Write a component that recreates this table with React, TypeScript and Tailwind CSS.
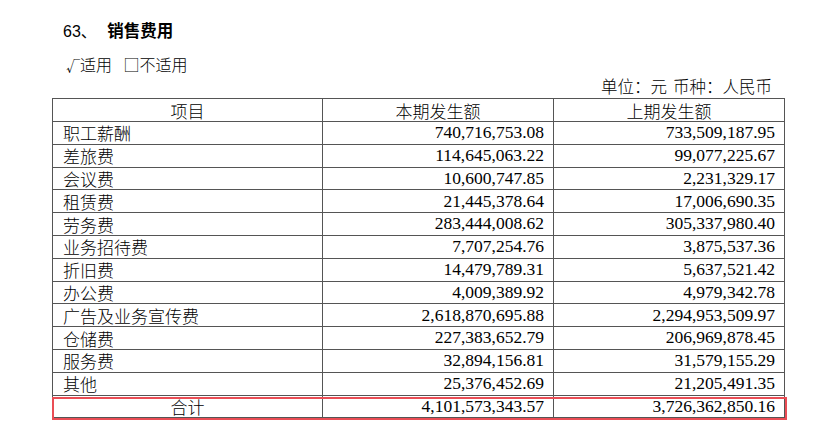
import React from "react";

type Row = { name: string; current: string; previous: string };

const rows: Row[] = [
  { name: "职工薪酬", current: "740,716,753.08", previous: "733,509,187.95" },
  { name: "差旅费", current: "114,645,063.22", previous: "99,077,225.67" },
  { name: "会议费", current: "10,600,747.85", previous: "2,231,329.17" },
  { name: "租赁费", current: "21,445,378.64", previous: "17,006,690.35" },
  { name: "劳务费", current: "283,444,008.62", previous: "305,337,980.40" },
  { name: "业务招待费", current: "7,707,254.76", previous: "3,875,537.36" },
  { name: "折旧费", current: "14,479,789.31", previous: "5,637,521.42" },
  { name: "办公费", current: "4,009,389.92", previous: "4,979,342.78" },
  { name: "广告及业务宣传费", current: "2,618,870,695.88", previous: "2,294,953,509.97" },
  { name: "仓储费", current: "227,383,652.79", previous: "206,969,878.45" },
  { name: "服务费", current: "32,894,156.81", previous: "31,579,155.29" },
  { name: "其他", current: "25,376,452.69", previous: "21,205,491.35" },
];

const serif = "font-['Liberation_Serif','Noto_Sans_CJK_SC',serif]";
const cell = "border border-[#555] p-0 leading-none";

const DataRow: React.FC<{ row: Row }> = ({ row }) => (
  <tr className="h-[22.8px]">
    <td className={`${cell} pl-[10px] text-[17px] text-left font-['Noto_Sans_CJK_SC',sans-serif] font-light`}>
      {row.name}
    </td>
    <td className={`${cell} pr-[9px] text-[17.5px] text-right`}>{row.current}</td>
    <td className={`${cell} pr-[9px] text-[17.5px] text-right`}>{row.previous}</td>
  </tr>
);

export default function App() {
  return (
    <div className={`relative h-[426px] w-[830px] overflow-hidden bg-white text-black ${serif}`}>
      <div className="pl-[63px] pt-[21px] h-[41px] text-[16px] leading-[20px] font-['Liberation_Sans','Noto_Sans_CJK_SC',sans-serif]">
        63、 <span className="ml-[6px] font-bold text-[16.5px]">销售费用</span>
      </div>

      <div className="pl-[66px] mt-[13px] h-[20px] text-[16px] leading-[20px] font-['Noto_Sans_CJK_SC',sans-serif] font-light">
        <span className="text-[14px]">√</span>适用 <span className="ml-[8px]">□不适用</span>
      </div>

      <div className="w-[772px] mt-[2px] h-[20px] text-right text-[16.5px] leading-[20px] font-['Noto_Sans_CJK_SC',sans-serif] font-light">
        单位：元<span className="ml-[6px]">币种：人民币</span>
      </div>

      <div className="relative ml-[52px] mt-[2px] w-[732px]">
        <table className="w-full border-collapse table-fixed">
          <colgroup>
            <col className="w-[270px]" />
            <col className="w-[231px]" />
            <col className="w-[231px]" />
          </colgroup>
          <tbody className="font-['Noto_Sans_CJK_SC',sans-serif] font-light">
            <tr className="h-[23px]">
              <td className={`${cell} text-center text-[17px]`}>项目</td>
              <td className={`${cell} text-center text-[17px]`}>本期发生额</td>
              <td className={`${cell} text-center text-[17px]`}>上期发生额</td>
            </tr>
          </tbody>
          <tbody className={serif}>
            {rows.map((row) => (
              <DataRow key={row.name} row={row} />
            ))}
            <tr className="h-[22.8px]">
              <td className={`${cell} text-center text-[17px] font-['Noto_Sans_CJK_SC',sans-serif] font-light`}>合计</td>
              <td className={`${cell} pr-[9px] text-[17.5px] text-right`}>4,101,573,343.57</td>
              <td className={`${cell} pr-[9px] text-[17.5px] text-right`}>3,726,362,850.16</td>
            </tr>
          </tbody>
        </table>
        <div className="absolute left-[0px] right-[-3px] bottom-[-2px] h-[23px] border-2 border-[#ea4d55] pointer-events-none" />
      </div>

      <div className="pl-[62px] mt-[9px] text-[15px] leading-[20px] text-[#999] font-['Noto_Sans_CJK_SC',sans-serif]">
        其他说明：
      </div>
    </div>
  );
}
